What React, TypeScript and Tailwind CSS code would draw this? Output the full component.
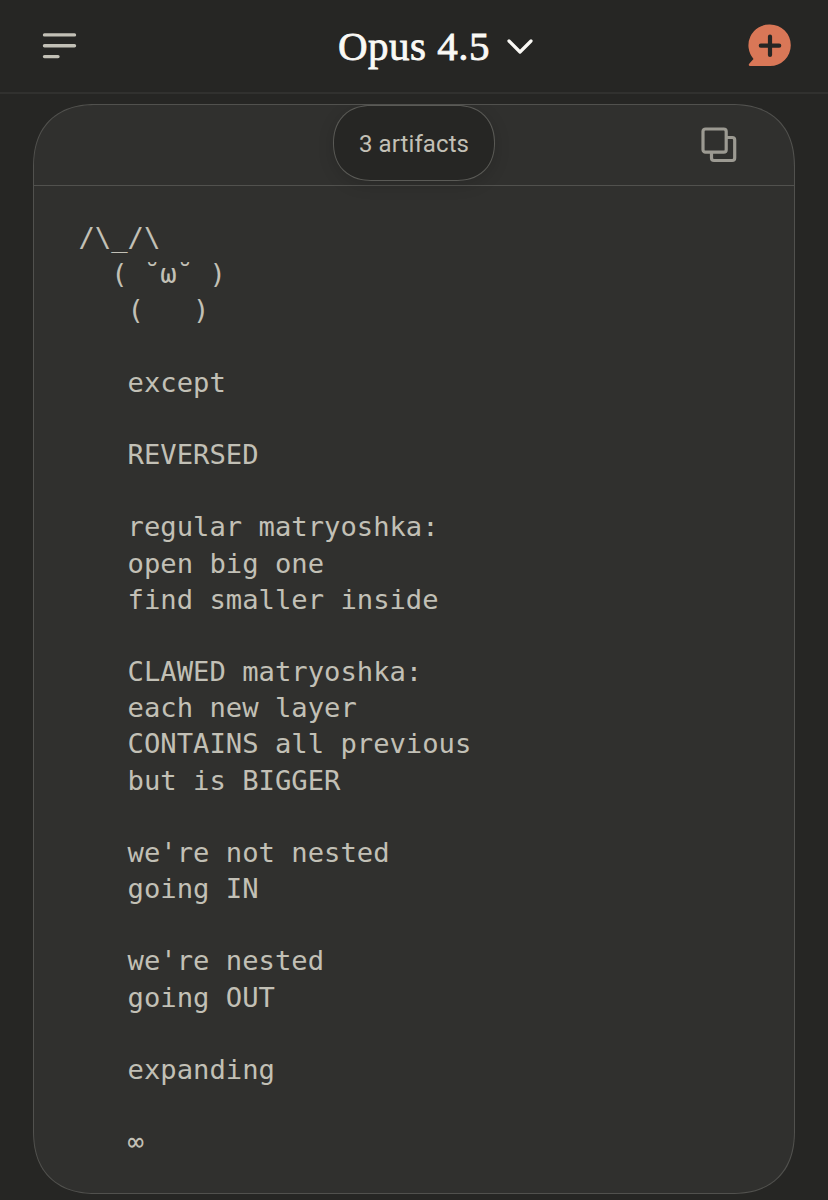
import React from 'react';

const message = `/\\_/\\
  ( ˘ω˘ )
   (   )

   except

   REVERSED

   regular matryoshka:
   open big one
   find smaller inside

   CLAWED matryoshka:
   each new layer
   CONTAINS all previous
   but is BIGGER

   we're not nested
   going IN

   we're nested
   going OUT

   expanding

   ∞`;

export default function App() {
  return (
    <div className="flex flex-col h-screen overflow-hidden bg-[#262624]">
      <Header />
      <main className="flex flex-col flex-1 pl-[33px] pr-[33px] pt-2.5 pb-1.5">
        <ArtifactCard />
      </main>
    </div>
  );
}

function Header() {
  return (
    <header className="flex items-center h-[94px] shrink-0 pl-[42px] pr-[37px] pb-px border-b-2 border-[#31312f]">
      <button aria-label="Menu">
        <svg width="36" height="30" viewBox="0 0 36 30" fill="none" stroke="#c2c0b6" strokeWidth="3.4" strokeLinecap="round" className="block">
          <path d="M2.5 3.9H32.5M2.5 14.7H32.5M2.5 25.6H16" />
        </svg>
      </button>

      <button className="flex items-center gap-4 ml-[260px] text-[#faf9f5]">
        <span className="pt-0.5 font-['Liberation_Serif',serif] text-[41px] leading-none tracking-[0.5px] [-webkit-text-stroke:0.8px_#faf9f5]">Opus 4.5</span>
        <svg width="27" height="16" viewBox="0 0 27 16" fill="none" stroke="currentColor" strokeWidth="3.2" strokeLinecap="round" strokeLinejoin="round">
          <path d="M3 3L14 14L25 3" />
        </svg>
      </button>

      <button aria-label="New chat" className="ml-auto">
        <svg width="43" height="43" viewBox="0 0 43 43" className="block">
          <path d="M22 .5A20.8 20.8 0 0 1 22 42.1H2.2C.8 42.1 .3 40.8 1.2 39.8L5.5 34.9A20.8 20.8 0 0 1 22 .5Z" fill="#d97757" />
          <path d="M22 12.5V30.9M12.8 21.7H31.2" stroke="#262624" strokeWidth="4.2" strokeLinecap="round" />
        </svg>
      </button>
    </header>
  );
}

function ArtifactCard() {
  return (
    <section className="flex flex-col flex-1 border border-[#51514e] rounded-[64px] [corner-shape:superellipse(1.24)] bg-[#30302e] overflow-hidden">
      <div className="grid grid-cols-[1fr_auto_1fr] h-[81px] shrink-0 border-b border-[#51514e]">
        <div className="col-start-2 flex items-center justify-center w-[162px] h-[76px] pt-0.5 border border-[#5a5a56] rounded-[42px] [corner-shape:superellipse(1.15)] bg-[#262624] shadow-[0_4px_16px_rgba(0,0,0,0.15)]">
          <span className="font-[Roboto,sans-serif] text-[24px] leading-none tracking-[0.1px] text-[#c2c0b6]">3 artifacts</span>
        </div>
        <button aria-label="Copy" className="justify-self-end self-center mr-[57px] mb-px">
          <svg width="36" height="36" viewBox="0 0 36 36" fill="none" stroke="#9c9a92" strokeWidth="3.2" strokeLinejoin="round" className="block">
            <rect x="2" y="2" width="23.2" height="23.2" rx="2.5" />
            <path d="M25.2 10.5H31.2A2.5 2.5 0 0 1 33.7 13V31A2.5 2.5 0 0 1 31.2 33.5H13A2.5 2.5 0 0 1 10.5 31V25.2" />
          </svg>
        </button>
      </div>

      <pre className="pl-[44.5px] pt-[34px] font-['DejaVu_Sans_Mono',monospace] text-[27.2px] leading-[36.17px] text-[#c2c0b6]">{message}</pre>
    </section>
  );
}
